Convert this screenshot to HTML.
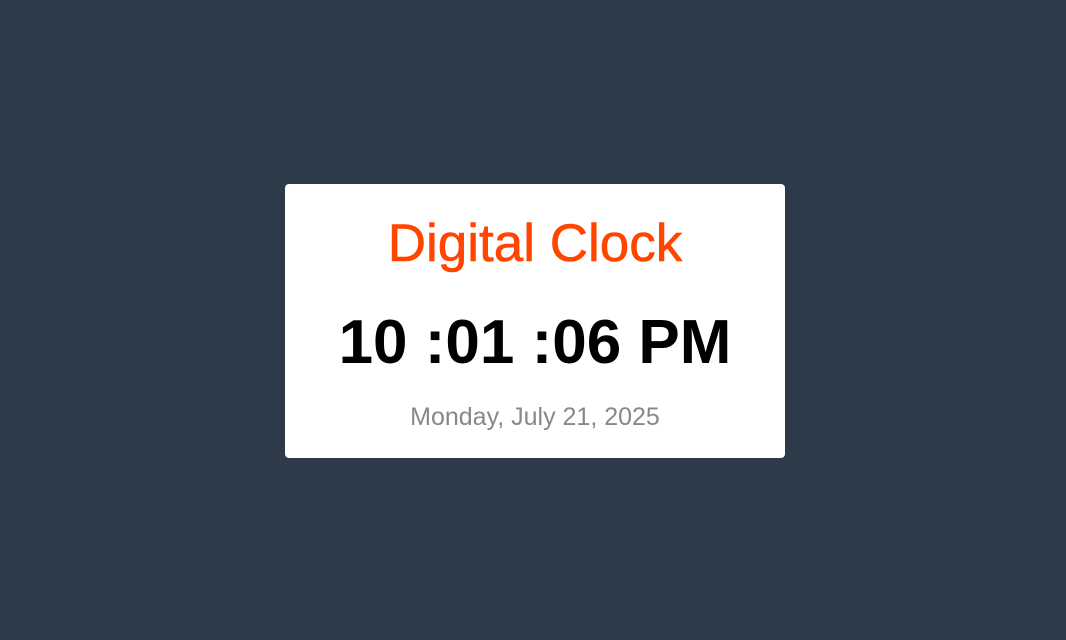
<!DOCTYPE html>
<html><head><style>
html,body{margin:0;padding:0;width:1066px;height:640px;background:#2d3a4a;overflow:hidden;font-family:"Liberation Sans",sans-serif}
.card{position:absolute;left:285px;top:184px;width:500px;height:274px;background:#fff;border-radius:4px}
.t{position:absolute;left:0;width:500px;text-align:center;white-space:nowrap}
.title{top:30px;font-size:53px;line-height:60px;color:#ff4500;-webkit-text-stroke:0.6px #ff4500}
.time{top:124px;font-size:62px;line-height:70px;font-weight:bold;color:#000}
.date{top:218px;font-size:25px;line-height:30px;color:#888}
</style></head><body>
<div class="card">
<div class="t title">Digital Clock</div>
<div class="t time">10 :01 :06 PM</div>
<div class="t date">Monday, July 21, 2025</div>
</div>
</body></html>
